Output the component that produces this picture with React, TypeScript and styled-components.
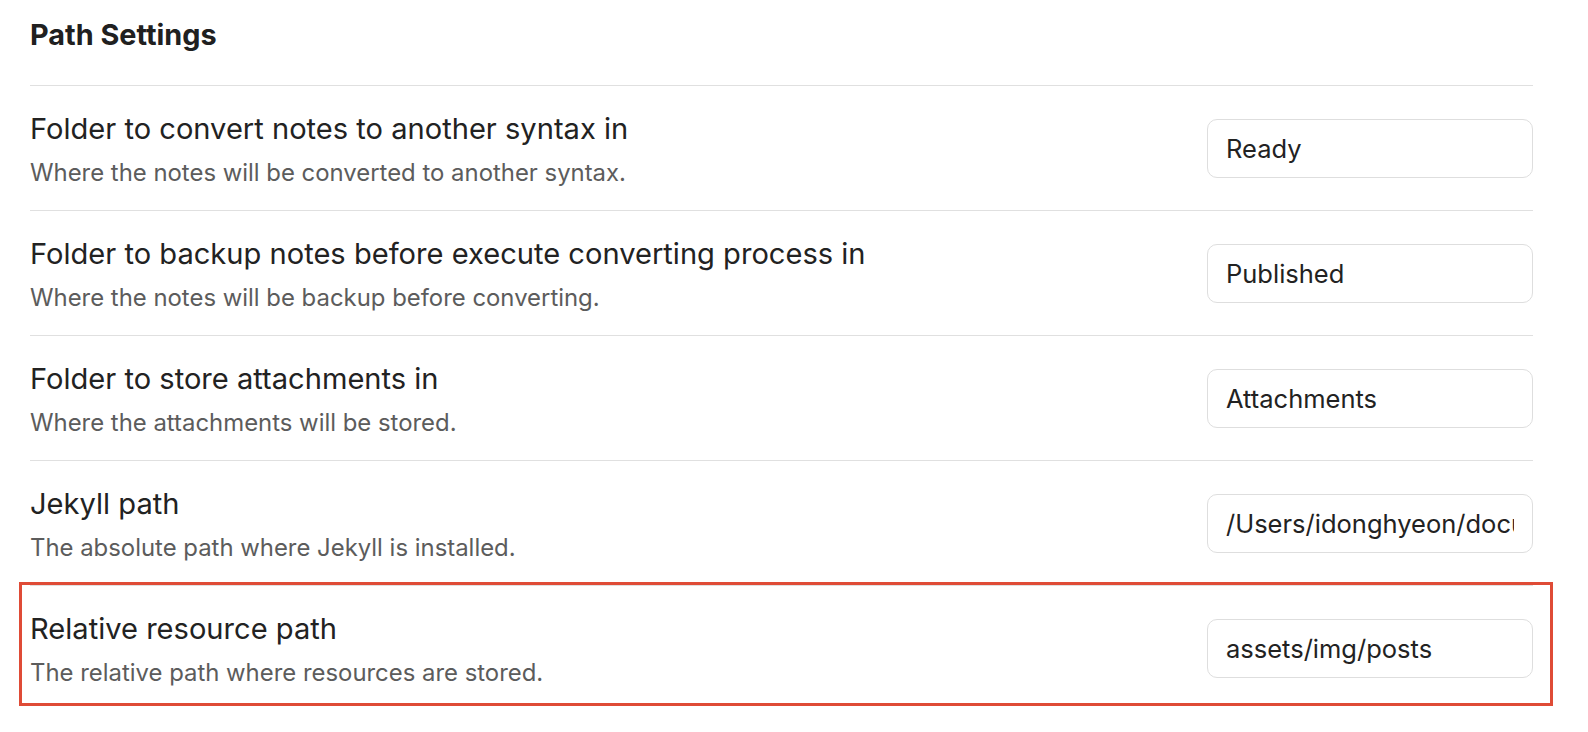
import styled, { createGlobalStyle } from 'styled-components';

const GlobalStyle = createGlobalStyle`
  html, body {
    margin: 0;
    padding: 0;
    background: #ffffff;
  }

  body {
    font-family: Inter, "Noto Sans", "Liberation Sans", sans-serif;
    color: #222222;
  }
`;

const Page = styled.main`
  padding: 0 55px 0 30px;
`;

const Heading = styled.h2`
  margin: 0;
  padding-top: 17px;
  height: 68px;
  font-size: 28.8px;
  font-weight: 700;
  line-height: 36px;
  color: #202020;
`;

const Row = styled.div<{ $highlight?: boolean }>`
  position: relative;
  display: flex;
  align-items: center;
  justify-content: space-between;
  gap: 24px;
  height: 124px;
  border-top: 1px solid #e0e0e0;

  ${({ $highlight }) =>
    $highlight &&
    `
    &::after {
      content: '';
      position: absolute;
      top: -4px;
      left: -11px;
      right: -20px;
      bottom: 4px;
      border: 3px solid #df4b36;
      pointer-events: none;
    }
  `}
`;

const Info = styled.div`
  display: flex;
  flex-direction: column;
  gap: 10px;
  padding-top: 2px;
`;

const Name = styled.div`
  font-size: 29.1px;
  line-height: 38px;
  color: #222222;
`;

const Description = styled.div`
  font-size: 23.9px;
  line-height: 30px;
  color: #5c5c5c;
`;

const Field = styled.input`
  box-sizing: border-box;
  width: 326px;
  height: 59px;
  padding: 0 18px;
  border: 1.5px solid #dedede;
  border-radius: 10px;
  background: #ffffff;
  font-family: inherit;
  font-size: 25.5px;
  color: #222222;
  outline: none;
`;

const settings = [
  {
    name: 'Folder to convert notes to another syntax in',
    desc: 'Where the notes will be converted to another syntax.',
    value: 'Ready',
  },
  {
    name: 'Folder to backup notes before execute converting process in',
    desc: 'Where the notes will be backup before converting.',
    value: 'Published',
  },
  {
    name: 'Folder to store attachments in',
    desc: 'Where the attachments will be stored.',
    value: 'Attachments',
  },
  {
    name: 'Jekyll path',
    desc: 'The absolute path where Jekyll is installed.',
    value: '/Users/idonghyeon/documents/blog',
  },
  {
    name: 'Relative resource path',
    desc: 'The relative path where resources are stored.',
    value: 'assets/img/posts',
    highlight: true,
  },
];

export default function App() {
  return (
    <>
      <GlobalStyle />
      <Page>
        <Heading>Path Settings</Heading>
        {settings.map((s) => (
          <Row key={s.name} $highlight={s.highlight}>
            <Info>
              <Name>{s.name}</Name>
              <Description>{s.desc}</Description>
            </Info>
            <Field type="text" defaultValue={s.value} readOnly />
          </Row>
        ))}
      </Page>
    </>
  );
}
